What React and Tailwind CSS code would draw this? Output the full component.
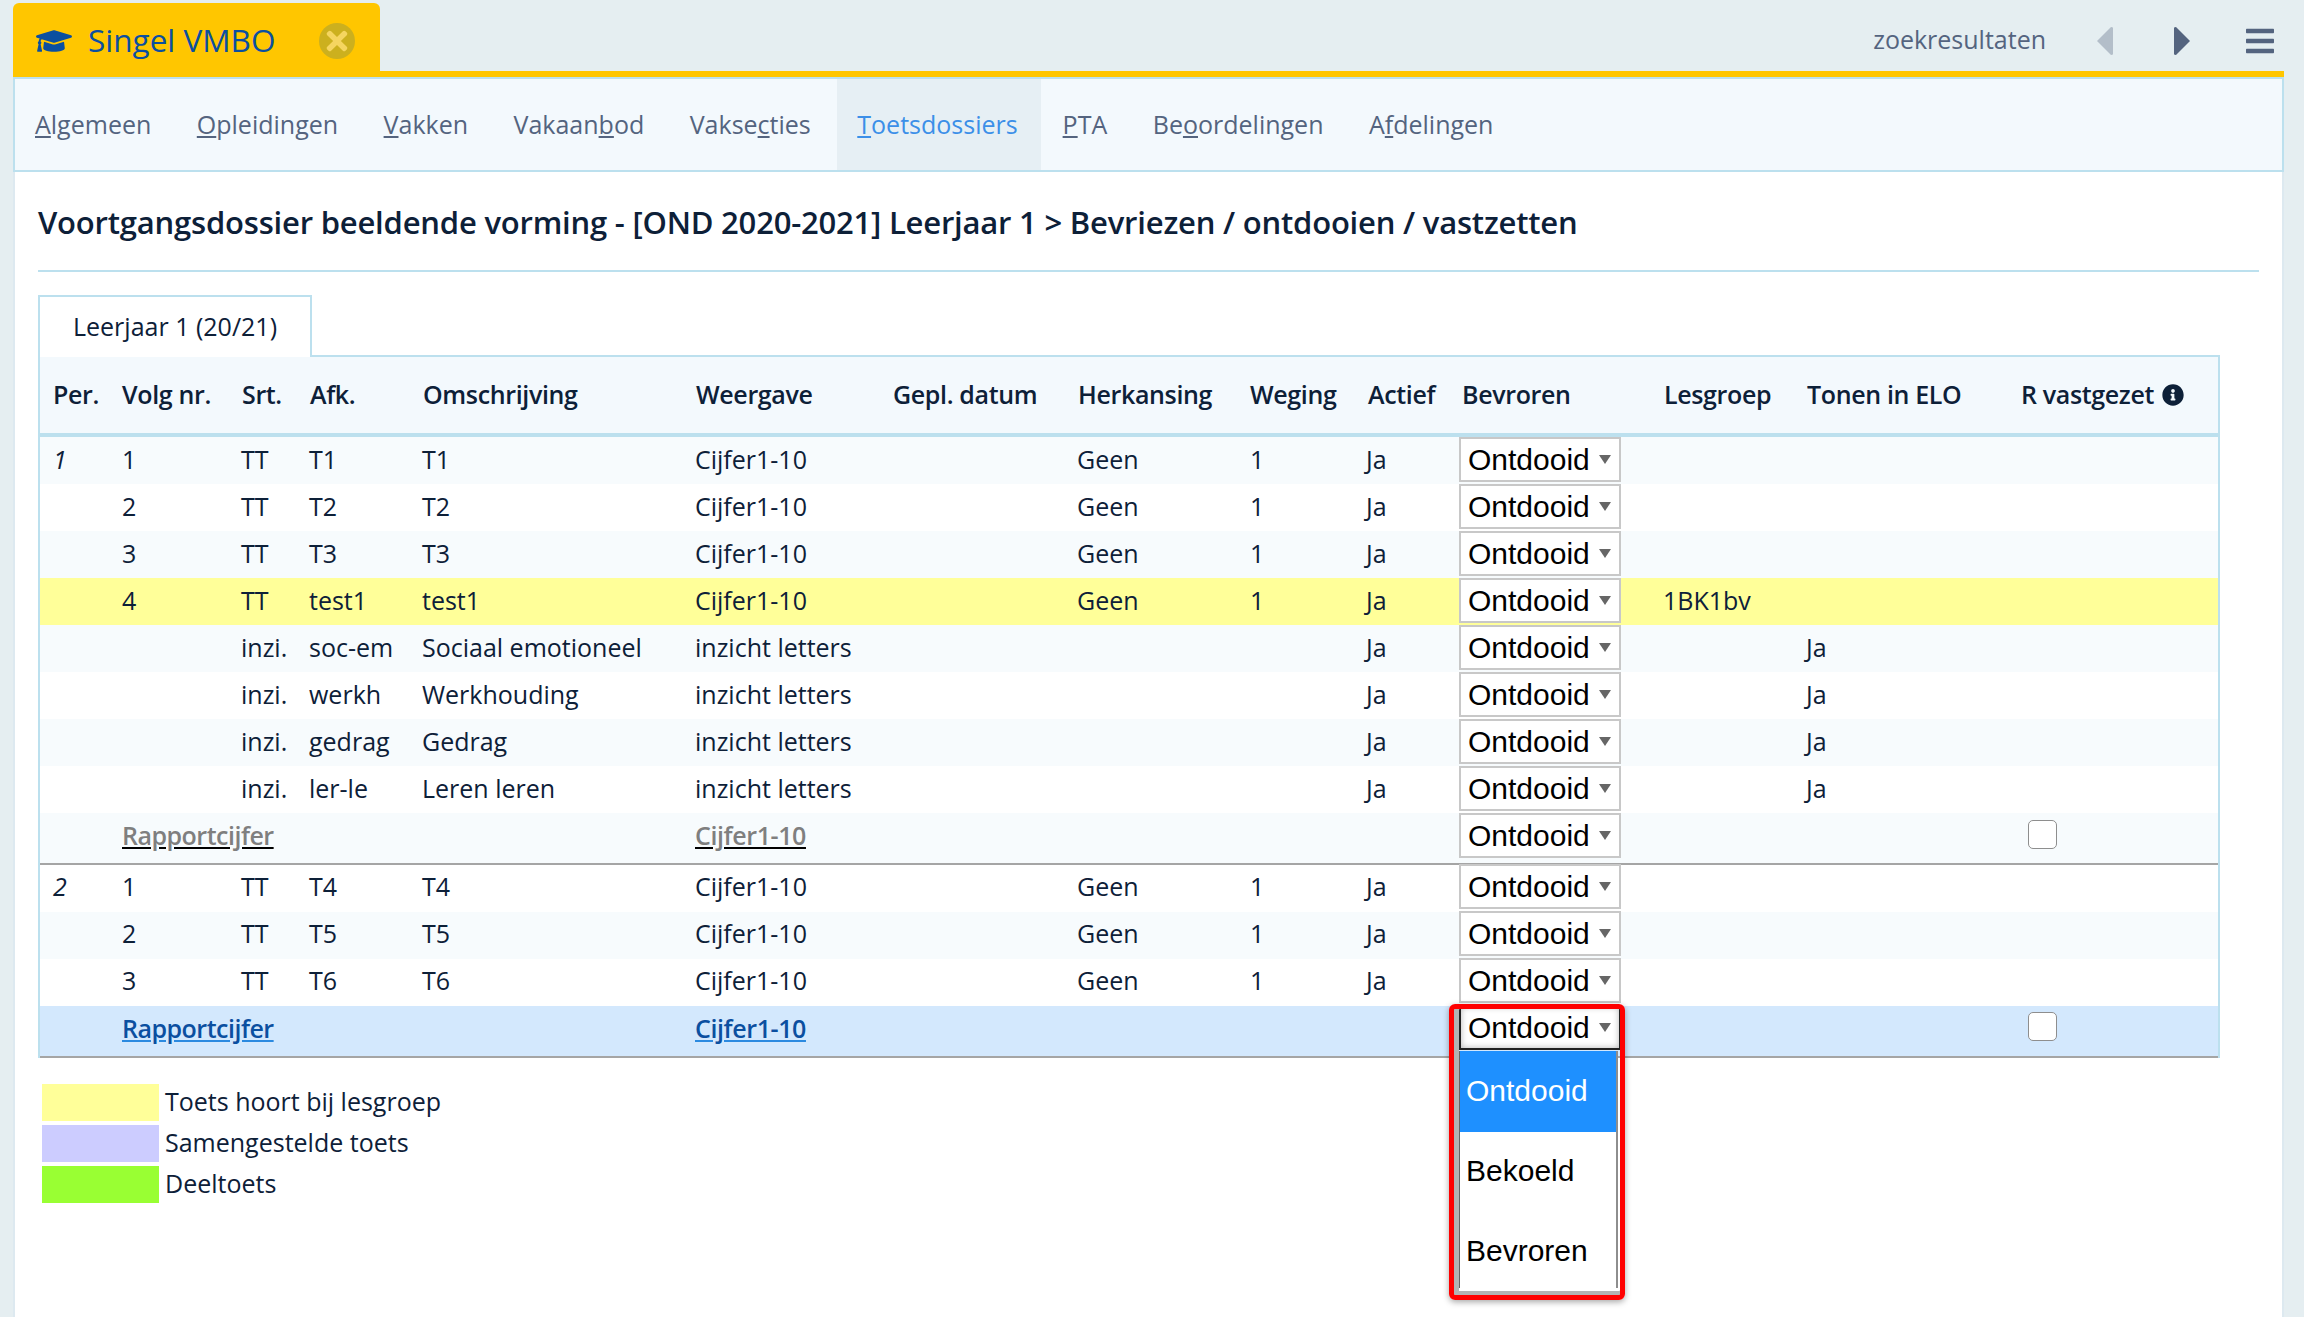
import { FaGraduationCap, FaBars, FaInfoCircle, FaTimes } from 'react-icons/fa'

const navItems = [
  ['A', 'lgemeen'], ['O', 'pleidingen'], ['V', 'akken'], ['Vakaan', 'b', 'od'], ['Vakse', 'c', 'ties'],
  ['T', 'oetsdossiers'], ['P', 'TA'], ['Be', 'o', 'ordelingen'], ['A', 'f', 'delingen'],
]

function NavLabel({ parts }) {
  // underlined access key letter
  if (parts.length === 3) return <>{parts[0]}<u>{parts[1]}</u>{parts[2]}</>
  return <><u>{parts[0]}</u>{parts[1]}</>
}

function Arrow({ left, className }) {
  return (
    <svg viewBox="0 0 16 28" className={`h-[28px] w-[16px] ${className}`} fill="currentColor">
      <path d={left ? 'M16 1 V27 Q16 28 14 28 L0 14 L14 0 Q16 0 16 1 Z' : 'M0 1 V27 Q0 28 2 28 L16 14 L2 0 Q0 0 0 1 Z'} />
    </svg>
  )
}

function Select({ open, up }) {
  return (
    <div className={`flex h-[45px] w-[162px] items-center justify-between pl-[7px] pr-[8px] font-['Liberation_Sans',sans-serif] text-[30px] text-black border-2 bg-white ${up ? '-mt-px' : ''} ${open ? 'border-[#222] shadow-[inset_0_0_6px_rgba(0,0,0,0.3)]' : 'border-[#c8c8c8]'}`}>
      <span>Ontdooid</span>
      <span className="h-0 w-0 border-x-[6px] border-t-[9px] border-x-transparent border-t-[#666]" />
    </div>
  )
}

const rows = [
  { per: '1', nr: '1', srt: 'TT', afk: 'T1', oms: 'T1', w: 'Cijfer1-10', her: 'Geen', weg: '1', act: 'Ja', bg: 'bg-[#f7fbfd]' },
  { nr: '2', srt: 'TT', afk: 'T2', oms: 'T2', w: 'Cijfer1-10', her: 'Geen', weg: '1', act: 'Ja', bg: 'bg-white' },
  { nr: '3', srt: 'TT', afk: 'T3', oms: 'T3', w: 'Cijfer1-10', her: 'Geen', weg: '1', act: 'Ja', bg: 'bg-[#f7fbfd]' },
  { nr: '4', srt: 'TT', afk: 'test1', oms: 'test1', w: 'Cijfer1-10', her: 'Geen', weg: '1', act: 'Ja', les: '1BK1bv', bg: 'bg-[#ffff99]' },
  { srt: 'inzi.', afk: 'soc-em', oms: 'Sociaal emotioneel', w: 'inzicht letters', act: 'Ja', elo: 'Ja', bg: 'bg-[#f7fbfd]' },
  { srt: 'inzi.', afk: 'werkh', oms: 'Werkhouding', w: 'inzicht letters', act: 'Ja', elo: 'Ja', bg: 'bg-white' },
  { srt: 'inzi.', afk: 'gedrag', oms: 'Gedrag', w: 'inzicht letters', act: 'Ja', elo: 'Ja', bg: 'bg-[#f7fbfd]' },
  { srt: 'inzi.', afk: 'ler-le', oms: 'Leren leren', w: 'inzicht letters', act: 'Ja', elo: 'Ja', bg: 'bg-white' },
  { rapport: true, bg: 'bg-[#f7fbfd]' },
  { up: true, per: '2', nr: '1', srt: 'TT', afk: 'T4', oms: 'T4', w: 'Cijfer1-10', her: 'Geen', weg: '1', act: 'Ja', bg: 'bg-white' },
  { up: true, nr: '2', srt: 'TT', afk: 'T5', oms: 'T5', w: 'Cijfer1-10', her: 'Geen', weg: '1', act: 'Ja', bg: 'bg-[#f7fbfd]' },
  { up: true, nr: '3', srt: 'TT', afk: 'T6', oms: 'T6', w: 'Cijfer1-10', her: 'Geen', weg: '1', act: 'Ja', bg: 'bg-white' },
  { up: true, rapport: true, active: true, bg: 'bg-[#d3e8fd]' },
]

const colWidths = [68, 120, 68, 113, 273, 197, 185, 172, 118, 94, 202, 143, 214, 211]

const headers = ['Per.', 'Volg nr.', 'Srt.', 'Afk.', 'Omschrijving', 'Weergave', 'Gepl. datum', 'Herkansing', 'Weging', 'Actief', 'Bevroren', 'Lesgroep', 'Tonen in ELO']

function Checkbox() {
  return <span className="block h-[29px] w-[29px] rounded-[5px] border-[1.5px] border-[#8e8e8e] bg-white" />
}

function Row({ r }) {
  const linkCls = r.active ? 'text-[#0b4fa0] underline decoration-[#2b8ae0]' : 'text-[#7f7f7f] underline decoration-black'
  const line = r.rapport ? 'border-b-2 border-[#a5a5a5] pb-[5px]' : r.up ? 'pb-[3px]' : 'pb-px'
  const cell = `pl-[13px] ${line}`
  return (
    <tr className={`${r.bg} ${r.rapport ? 'h-[52px]' : 'h-[47px]'}`}>
      <td className={`italic ${cell}`}>{r.per}</td>
      {r.rapport ? (
        <td colSpan={4} className={`pl-[14px] font-semibold tracking-[-0.5px] ${line}`}><span className={linkCls}>Rapportcijfer</span></td>
      ) : (
        <>
          <td className={`pl-[14px] ${line}`}>{r.nr}</td>
          <td className={cell}>{r.srt}</td>
          <td className={cell}>{r.afk}</td>
          <td className={cell}>{r.oms}</td>
        </>
      )}
      <td className={cell}>{r.rapport ? <span className={`font-semibold tracking-[-0.4px] ${linkCls}`}>Cijfer1-10</span> : r.w}</td>
      <td className={cell} />
      <td className={cell}>{r.her}</td>
      <td className={`pl-[14px] ${line}`}>{r.weg}</td>
      <td className={`pl-[12px] ${line}`}>{r.act}</td>
      <td className={`pl-[11px] align-top ${r.rapport ? 'border-b-2 border-[#a5a5a5]' : ''}`}><Select open={r.active} up={r.up} /></td>
      <td className={cell}>{r.les}</td>
      <td className={cell}>{r.elo}</td>
      <td className={`pl-[21px] align-top ${r.rapport ? 'border-b-2 border-[#a5a5a5]' : ''} ${r.active ? 'pt-[6px]' : r.rapport ? 'pt-[7px]' : ''}`}>{r.rapport && <Checkbox />}</td>
    </tr>
  )
}

export default function App() {
  return (
    <div className="flex h-screen min-h-[1317px] flex-col overflow-hidden bg-[#e5eef1] pl-[13px] pr-[20px] pt-[3px] font-['Open_Sans',sans-serif] text-[25px] text-[#0d2038]">
      <div className="flex h-[68px] shrink-0 justify-between">
        <div className="flex h-full w-[367px] items-center rounded-t-[6px] bg-[#ffc600] pl-[23px] pt-[8px] text-[#0b4fa0]">
          <FaGraduationCap className="text-[36px]" />
          <span className="ml-[16px] pb-[3px] text-[31.5px]">Singel VMBO</span>
          <span className="ml-[44px] flex h-[36px] w-[36px] items-center justify-center rounded-full bg-[#ccb01e] text-[#f5d560]">
            <FaTimes className="text-[30px]" />
          </span>
        </div>
        <div className="flex items-center pr-[8px] pt-[8px] text-[#54647f]">
          <span className="pb-[3px]">zoekresultaten</span>
          <Arrow left className="ml-[51px] text-[#b3bec9]" />
          <Arrow className="ml-[61px]" />
          <FaBars className="ml-[54px] text-[32px]" />
        </div>
      </div>
      <div className="h-[6px] shrink-0 bg-[#ffc600]" />
      <nav className="flex h-[95px] shrink-0 items-stretch border-2 border-[#bce0ee] bg-[#f3f9fd] text-[#54647f]">
        {navItems.map((parts, i) => (
          <span key={i} className={`flex items-center pl-[20px] ${i === 5 ? 'ml-[6.5px] bg-[#e6eff4] pr-[23px] text-[#3c8fe8]' : 'pr-[20px]'} ${i === 6 ? 'ml-[2px]' : i > 0 && i !== 5 ? 'ml-[5.5px]' : ''}`}>
            <span><NavLabel parts={parts} /></span>
          </span>
        ))}
      </nav>
      <div className="flex-1 border-x-2 border-[#dde9f0] bg-white px-[23px]">
        <h1 className="flex h-[100px] items-center border-b-2 border-[#bce0ee] pt-[2px] text-[31px] font-semibold tracking-[-0.2px]">
          Voortgangsdossier beeldende vorming - [OND 2020-2021] Leerjaar 1 &gt; Bevriezen / ontdooien / vastzetten
        </h1>
        <div className="relative z-[1] mt-[23px] flex h-[62px] w-[274px] items-center justify-center border-2 border-b-0 border-[#bce0ee] bg-white">
          Leerjaar 1 (20/21)
        </div>
        <div className="relative -mt-[2px] w-[2182px]">
          <div className="border-x-2 border-t-2 border-[#bce0ee]">
            <table className="w-full table-fixed border-separate border-spacing-0">
              <colgroup>
                {colWidths.map((w, i) => <col key={i} style={{ width: w }} />)}
              </colgroup>
              <thead>
                <tr className="h-[80px] bg-[#f3f9fd] text-left">
                  {headers.map((h, i) => <th key={i} className={`${i === 0 ? 'pl-[13px]' : 'pl-[14px]'} border-b-4 border-[#bce0ee] font-semibold tracking-[-0.35px]`}>{h}</th>)}
                  <th className="whitespace-nowrap border-b-4 border-[#bce0ee] pl-[14px] font-semibold tracking-[-0.35px]">R vastgezet <FaInfoCircle className="ml-[2px] inline align-[-2px] text-[22px]" /></th>
                </tr>
              </thead>
              <tbody>
                {rows.map((r, i) => <Row key={i} r={r} />)}
              </tbody>
            </table>
          </div>
          {/* open dropdown with red marker, drawn over the table */}
          <div className="absolute left-[1411px] top-[649px] z-10 h-[296px] w-[176px] rounded-[6px] border-[5px] border-[#ff0000] shadow-[0_2px_6px_rgba(0,0,0,0.35),inset_5px_0_0_#b3b3b3,inset_0_-4px_0_#b3b3b3]">
            <div className="ml-[5px] mt-[42px] w-[159px] border-l border-r-2 border-l-[#666] border-r-[#8e8e8e] bg-white font-['Liberation_Sans',sans-serif] text-[30px] text-black">
              <div className="flex h-[81px] items-center bg-[#1e90ff] pb-[2px] pl-[6px] text-white">Ontdooid</div>
              <div className="flex h-[80px] items-center pb-[3px] pl-[6px]">Bekoeld</div>
              <div className="flex h-[76px] items-center pl-[6px]">Bevroren</div>
            </div>
          </div>
        </div>
        <div className="mt-[26px] flex flex-col gap-[4px] pl-[4px]">
          {[['bg-[#ffff99]', 'Toets hoort bij lesgroep'], ['bg-[#ccccff]', 'Samengestelde toets'], ['bg-[#99ff33]', 'Deeltoets']].map(([c, t]) => (
            <div key={t} className="flex h-[37px] items-center">
              <span className={`h-[37px] w-[117px] ${c}`} />
              <span className="ml-[6px] pb-[2px]">{t}</span>
            </div>
          ))}
        </div>
      </div>
    </div>
  )
}
